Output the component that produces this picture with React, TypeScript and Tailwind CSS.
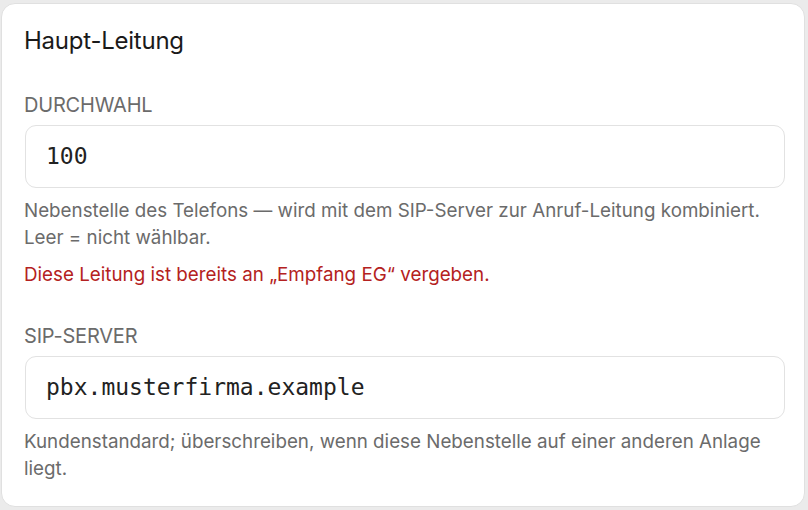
const sans = { fontFamily: 'Inter, "Noto Sans", sans-serif' };

function Field({
  label,
  value,
  help,
  error,
}: {
  label: string;
  value: string;
  help: string;
  error?: string;
}) {
  return (
    <div className="flex flex-col">
      <label className="text-[20px] leading-[24px] uppercase text-[#6b6b6b] tracking-[-0.01em]">{label}</label>
      <div className="mt-[8px] ml-[1px] h-[63px] flex items-center rounded-[11px] border-[1.5px] border-[#e2e2e2] bg-white px-[20px]">
        <span className="text-[23px] text-[#222]" style={{ fontFamily: '"DejaVu Sans Mono", monospace' }}>
          {value}
        </span>
      </div>
      <p className="mt-[9px] text-[18.8px] leading-[27px] text-[#6b6b6b]">{help}</p>
      {error && <p className="mt-[10px] text-[18.8px] leading-[27px] text-[#b42121]">{error}</p>}
    </div>
  );
}

export default function App() {
  return (
    <div className="min-h-screen bg-[#ebebeb] pt-[3px] pl-[1px]" style={sans}>
      <div className="w-[804px] h-[504px] rounded-[14px] border border-[#e0e0e0] bg-white pl-[22px] pr-[19px] pt-[21px]">
        <h2 className="text-[24px] leading-[32px] text-[#1a1a1a] tracking-[-0.01em]">Haupt-Leitung</h2>
        <div className="mt-[36px] flex flex-col gap-[36px]">
          <Field
            label="Durchwahl"
            value="100"
            help="Nebenstelle des Telefons — wird mit dem SIP-Server zur Anruf-Leitung kombiniert. Leer = nicht wählbar."
            error="Diese Leitung ist bereits an „Empfang EG“ vergeben."
          />
          <Field
            label="SIP-Server"
            value="pbx.musterfirma.example"
            help="Kundenstandard; überschreiben, wenn diese Nebenstelle auf einer anderen Anlage liegt."
          />
        </div>
      </div>
    </div>
  );
}
